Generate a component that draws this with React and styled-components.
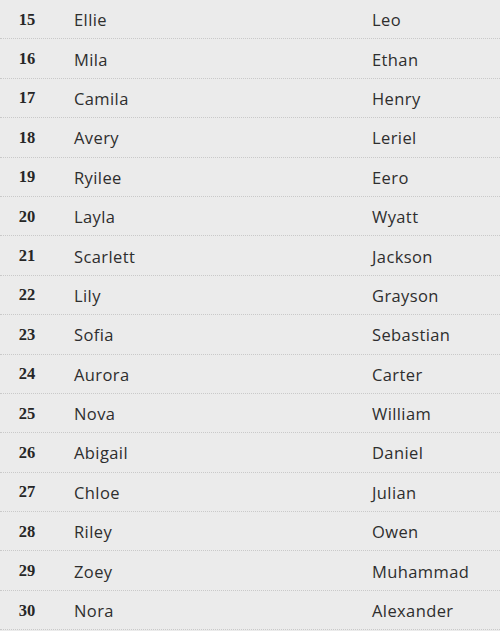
import React from "react";
import styled, { createGlobalStyle } from "styled-components";

const GlobalStyle = createGlobalStyle`
  html, body {
    margin: 0;
    padding: 0;
    background: #ebebeb;
  }
`;

const Table = styled.div`
  width: 500px;
  background: #ebebeb;
  color: #2b2b2b;
`;

const Row = styled.div`
  display: grid;
  grid-template-columns: 54px 298px 1fr;
  align-items: center;
  height: 39.4px;
  padding-top: 1px;
  box-sizing: border-box;
  border-bottom: 1px dotted #c9c9c9;
`;

const Num = styled.div`
  text-align: center;
  font-family: "Liberation Serif", "DejaVu Serif", serif;
  font-weight: bold;
  font-size: 16.5px;
  color: #262626;
`;

const Name = styled.div`
  padding-left: 20px;
  font-family: "Open Sans", "Liberation Sans", sans-serif;
  font-size: 16.5px;
  letter-spacing: 0.4px;
  color: #2e2e2e;
`;

const rows = [
  [15, "Ellie", "Leo"],
  [16, "Mila", "Ethan"],
  [17, "Camila", "Henry"],
  [18, "Avery", "Leriel"],
  [19, "Ryilee", "Eero"],
  [20, "Layla", "Wyatt"],
  [21, "Scarlett", "Jackson"],
  [22, "Lily", "Grayson"],
  [23, "Sofia", "Sebastian"],
  [24, "Aurora", "Carter"],
  [25, "Nova", "William"],
  [26, "Abigail", "Daniel"],
  [27, "Chloe", "Julian"],
  [28, "Riley", "Owen"],
  [29, "Zoey", "Muhammad"],
  [30, "Nora", "Alexander"]
];

const App = () => {
  return (
    <>
      <GlobalStyle />
      <Table>
        {rows.map(([n, girl, boy]) => (
          <Row key={n}>
            <Num>{n}</Num>
            <Name>{girl}</Name>
            <Name>{boy}</Name>
          </Row>
        ))}
      </Table>
    </>
  );
};

export default App;
